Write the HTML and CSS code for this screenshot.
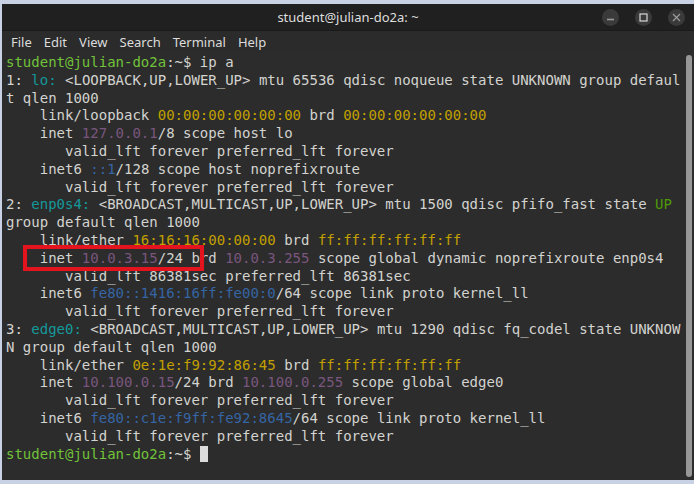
FILE: index.html
```html
<!DOCTYPE html>
<html lang="en">
<head>
  <meta charset="UTF-8">
  <title>student@julian-do2a: ~</title>
  <link rel="stylesheet" href="styles.css">
</head>
<body>

<div class="window">
  <!-- タイトルバー -->
  <header class="titlebar">
    <span class="title">student@julian-do2a: ~</span>
    <div class="controls">
      <span class="btn"><svg width="9" height="9" viewBox="0 0 9 9"><path d="M1 6.5h7" stroke="#9a9a9a" stroke-width="1.6"/></svg></span>
      <span class="btn"><svg width="9" height="9" viewBox="0 0 9 9"><rect x="1" y="1" width="7" height="7" fill="none" stroke="#d8d8d8" stroke-width="1.2"/></svg></span>
      <span class="btn"><svg width="9" height="9" viewBox="0 0 9 9"><path d="M1 1l7 7M8 1l-7 7" stroke="#9a9a9a" stroke-width="1.3"/></svg></span>
    </div>
  </header>

  <!-- メニュー -->
  <nav class="menubar">
    <span>File</span>
    <span>Edit</span>
    <span>View</span>
    <span>Search</span>
    <span>Terminal</span>
    <span>Help</span>
  </nav>

  <!-- 端末 -->
  <div class="terminal">
    <pre class="output"><span class="g">student@julian-do2a</span>:~$ ip a
1: <span class="c">lo:</span> &lt;LOOPBACK,UP,LOWER_UP&gt; mtu 65536 qdisc noqueue state UNKNOWN group defaul
t qlen 1000
    link/loopback <span class="y">00:00:00:00:00:00</span> brd <span class="y">00:00:00:00:00:00</span>
    inet <span class="m">127.0.0.1</span>/8 scope host lo
       valid_lft forever preferred_lft forever
    inet6 <span class="b">::1</span>/128 scope host noprefixroute
       valid_lft forever preferred_lft forever
2: <span class="c">enp0s4:</span> &lt;BROADCAST,MULTICAST,UP,LOWER_UP&gt; mtu 1500 qdisc pfifo_fast state <span class="up">UP</span>
group default qlen 1000
    link/ether <span class="y">16:16:16:00:00:00</span> brd <span class="y">ff:ff:ff:ff:ff:ff</span>
    inet <span class="m">10.0.3.15</span>/24 brd <span class="m">10.0.3.255</span> scope global dynamic noprefixroute enp0s4
       valid_lft 86381sec preferred_lft 86381sec
    inet6 <span class="b">fe80::1416:16ff:fe00:0</span>/64 scope link proto kernel_ll
       valid_lft forever preferred_lft forever
3: <span class="c">edge0:</span> &lt;BROADCAST,MULTICAST,UP,LOWER_UP&gt; mtu 1290 qdisc fq_codel state UNKNOW
N group default qlen 1000
    link/ether <span class="y">0e:1e:f9:92:86:45</span> brd <span class="y">ff:ff:ff:ff:ff:ff</span>
    inet <span class="m">10.100.0.15</span>/24 brd <span class="m">10.100.0.255</span> scope global edge0
       valid_lft forever preferred_lft forever
    inet6 <span class="b">fe80::c1e:f9ff:fe92:8645</span>/64 scope link proto kernel_ll
       valid_lft forever preferred_lft forever
<span class="g">student@julian-do2a</span>:~$ <span class="cursor"> </span></pre>
    <!-- 赤枠（注釈） -->
    <div class="highlight"></div>
    <div class="scrollbar"></div>
  </div>
</div>

</body>
</html>
```

FILE: styles.css
```css
/* === ページ全体 === */
body {
  margin: 0;
  background: #c8d2e4;
  width: 694px;
  height: 484px;
  overflow: hidden;
}

/* === ウィンドウ === */
.window {
  margin: 4px 0 0 2px;
  height: 476px;
  background: #2c2c2c;
  display: flex;
  flex-direction: column;
}

/* === タイトルバー === */
.titlebar {
  height: 26px;
  background: #202020;
  border-bottom: 1px solid #1a1a1a;
  display: flex;
  align-items: center;
  justify-content: center;
  position: relative;
  font-family: "Noto Sans", "Liberation Sans", sans-serif;
  font-size: 13px;
  color: #dedede;
}

.controls {
  position: absolute;
  right: 9px;
  top: 5px;
  display: flex;
  gap: 16px;
}

.btn {
  width: 17px;
  height: 17px;
  border-radius: 50%;
  background: #3a3a3a;
  display: flex;
  align-items: center;
  justify-content: center;
}

/* === メニュー === */
.menubar {
  height: 22px;
  background: #2b2b2b;
  display: flex;
  align-items: center;
  gap: 12px;
  padding-left: 9px;
  font-family: "Noto Sans", "Liberation Sans", sans-serif;
  font-size: 13px;
  color: #dcdcdc;
}

/* === 端末 === */
.terminal {
  flex: 1;
  display: flex;
  position: relative;
  background: #2c2c2c;
}

.output {
  flex: 1;
  margin: 0;
  padding: 1px 0 0 4px;
  font-family: "DejaVu Sans Mono", monospace;
  font-size: 14px;
  line-height: 17.8px;
  color: #d3d3cf;
  white-space: pre;
}

.g  { color: #72c23a; }
.c  { color: #14999b; }
.y  { color: #c2a000; }
.m  { color: #7a567e; }
.b  { color: #3565a4; }
.up { color: #4e9a06; }

.cursor {
  background: #dcdcdc;
}

/* 赤枠 */
.highlight {
  position: absolute;
  left: 21px;
  top: 192px;
  width: 173px;
  height: 18px;
  border: 4px solid #e3141d;
}

/* スクロールバー */
.scrollbar {
  width: 6px;
  margin: 2px 2px 3px 0;
  border-radius: 3px;
  background: #979797;
}
```
